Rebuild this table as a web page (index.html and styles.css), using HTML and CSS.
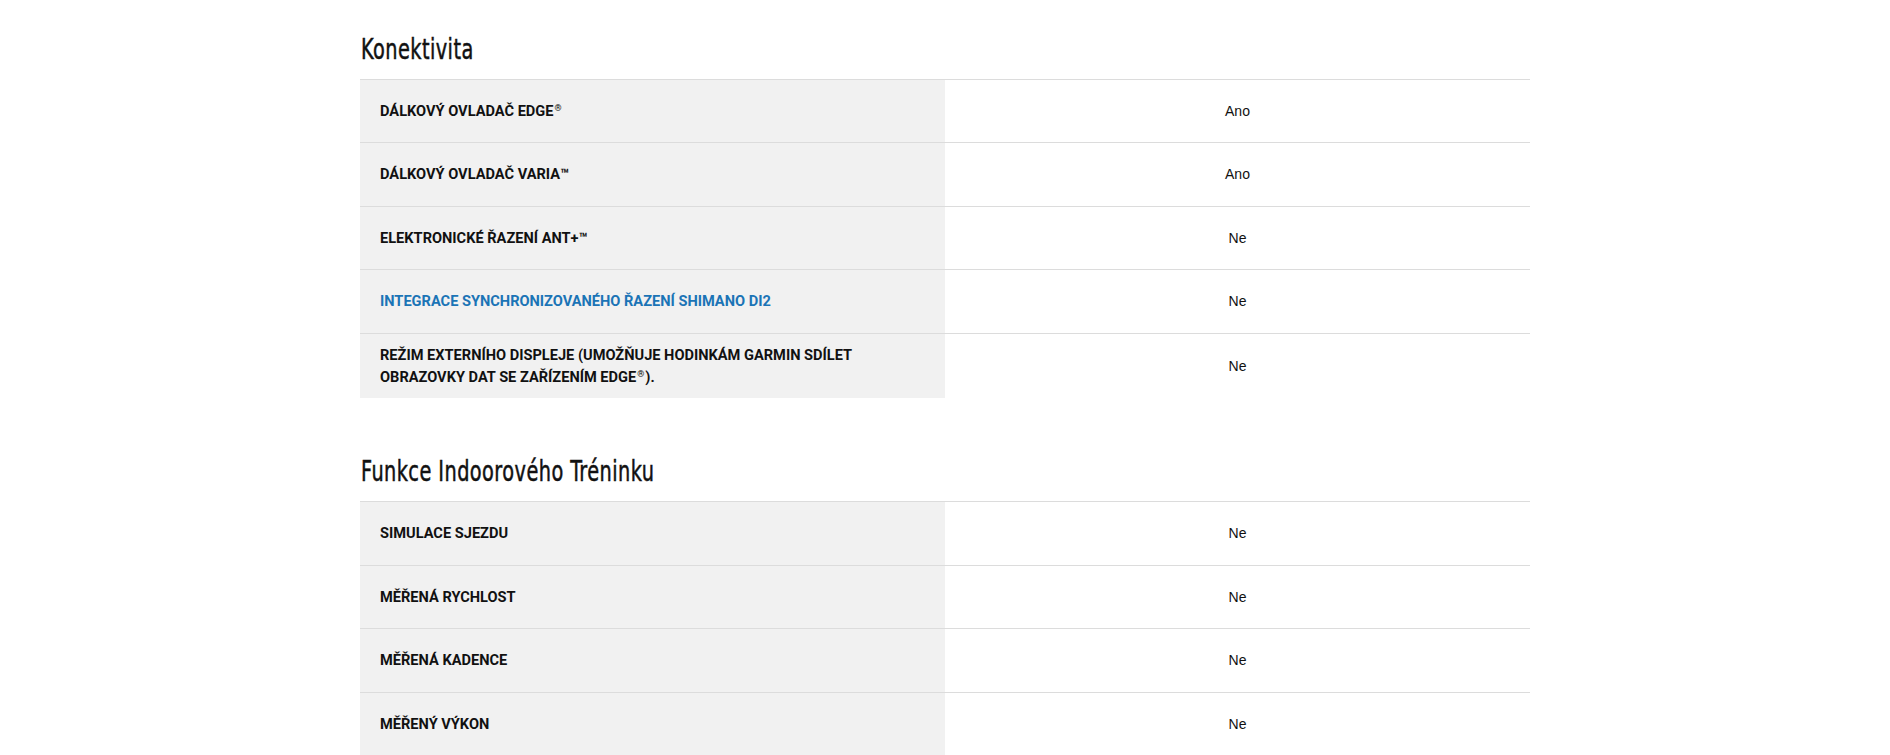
FILE: index.html
```html
<!DOCTYPE html>
<html lang="cs">
<head>
<meta charset="utf-8">
<title>Specifikace</title>
<link rel="stylesheet" href="styles.css">
</head>
<body>
<main class="container">
  <section class="spec">
    <h2 class="spec-title">Konektivita</h2>
    <div class="spec-table">
      <div class="spec-row"><div class="spec-label"><span>Dálkový ovladač Edge<sup class="mark">®</sup></span></div><div class="spec-value">Ano</div></div>
      <div class="spec-row"><div class="spec-label">Dálkový ovladač Varia™</div><div class="spec-value">Ano</div></div>
      <div class="spec-row"><div class="spec-label">Elektronické řazení ANT+™</div><div class="spec-value">Ne</div></div>
      <div class="spec-row"><div class="spec-label"><a class="spec-link" href="#">Integrace synchronizovaného řazení Shimano Di2</a></div><div class="spec-value">Ne</div></div>
      <div class="spec-row"><div class="spec-label"><span>Režim externího displeje (umožňuje hodinkám Garmin sdílet obrazovky dat se zařízením Edge<sup class="mark">®</sup>).</span></div><div class="spec-value">Ne</div></div>
    </div>
  </section>
  <section class="spec">
    <h2 class="spec-title">Funkce Indoorového Tréninku</h2>
    <div class="spec-table">
      <div class="spec-row"><div class="spec-label">Simulace sjezdu</div><div class="spec-value">Ne</div></div>
      <div class="spec-row"><div class="spec-label">Měřená rychlost</div><div class="spec-value">Ne</div></div>
      <div class="spec-row"><div class="spec-label">Měřená kadence</div><div class="spec-value">Ne</div></div>
      <div class="spec-row"><div class="spec-label">Měřený výkon</div><div class="spec-value">Ne</div></div>
    </div>
  </section>
</main>
</body>
</html>
```

FILE: styles.css
```css
html, body {
  margin: 0;
  padding: 0;
  background: #ffffff;
}

.container {
  width: 1170px;
  margin: 0 auto;
  padding-top: 29px;
}

.spec + .spec {
  margin-top: 53px;
}

.spec-title {
  margin: 0 0 10px 1px;
  font-family: "DejaVu Sans Condensed", "Liberation Sans", sans-serif;
  font-weight: 400;
  font-size: 29px;
  line-height: 40px;
  letter-spacing: 0.6px;
  color: #111111;
  -webkit-text-stroke: 0.5px #111111;
  transform: scaleX(0.74);
  transform-origin: left center;
}

.spec-row {
  display: grid;
  grid-template-columns: 1fr 1fr;
  border-top: 1px solid #dcdcdc;
}

.spec-label {
  box-sizing: border-box;
  min-height: 62.4px;
  padding: 10px 20px;
  display: flex;
  align-items: center;
  background: #f1f1f1;
  font-family: Roboto, "Liberation Sans", sans-serif;
  font-weight: 700;
  font-size: 14.6px;
  line-height: 22.4px;
  text-transform: uppercase;
  color: #111111;
}

.mark {
  padding: 0 1px;
  font-size: 9px;
  line-height: 0;
  vertical-align: 5px;
}

.spec-link {
  color: #1b74b6;
  text-decoration: none;
}

.spec-value {
  box-sizing: border-box;
  padding: 10px 20px;
  display: flex;
  align-items: center;
  justify-content: center;
  font-family: "Liberation Sans", Arial, sans-serif;
  font-size: 14px;
  line-height: 22.4px;
  color: #111111;
}
```
